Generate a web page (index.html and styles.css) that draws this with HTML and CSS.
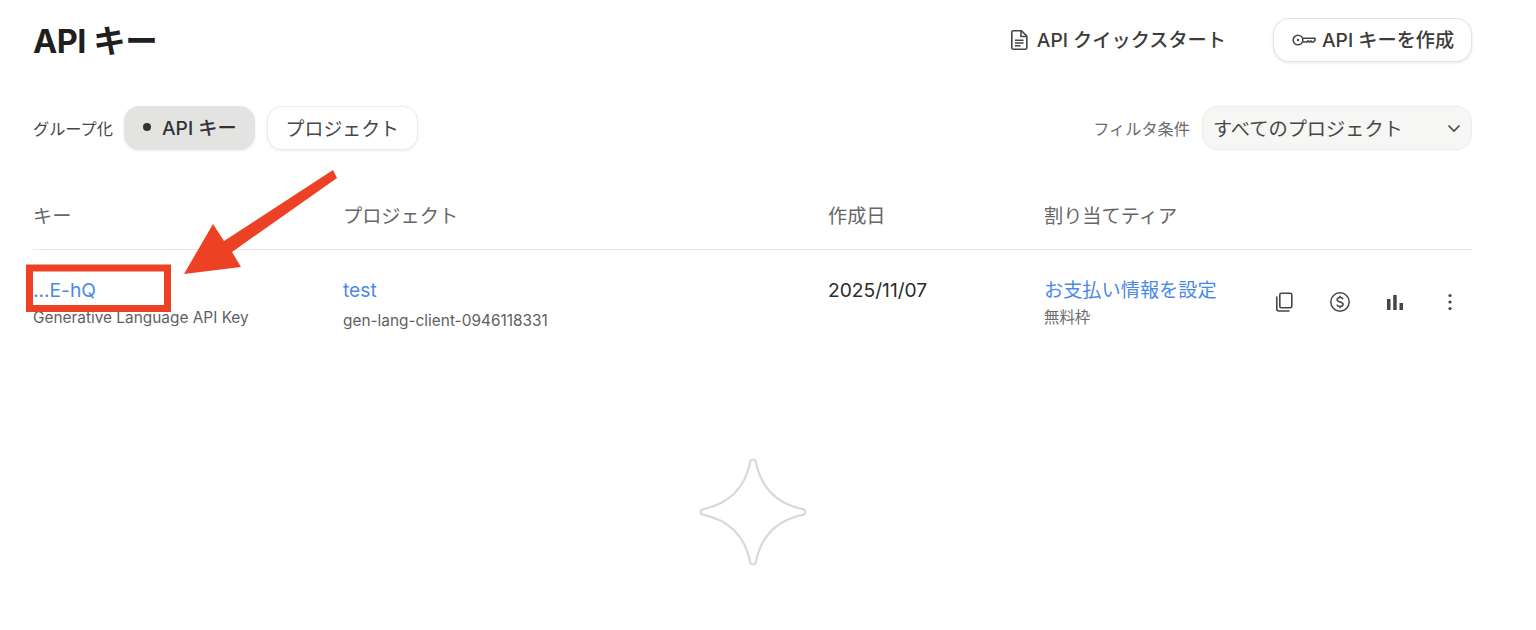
FILE: index.html
```html
<!DOCTYPE html>
<html lang="ja">
<head>
    <meta charset="UTF-8">
    <meta name="viewport" content="width=device-width, initial-scale=1.0">
    <title>API キー</title>
    <link rel="stylesheet" href="styles.css">
</head>
<body>
    <div class="container">
        <!-- Header -->
        <div class="header">
            <h1>API キー</h1>
            <div class="header-actions">
                <a class="quickstart">
                    <svg class="icon" width="20" height="20" viewBox="0 0 20 20" fill="none" stroke="#444746" stroke-width="1.600"><path d="M2.800 2.200A1.400 1.400 0 0 1 4.200 0.800H12.500L17.800 6.100V17.800A1.400 1.400 0 0 1 16.400 19.200H4.200A1.400 1.400 0 0 1 2.800 17.800Z" stroke-linejoin="round"/><path d="M12 1V6.500H17.500M6 10.200H14.500M6 13H14.500M6 15.800H11.500"/></svg>
                    <span>API クイックスタート</span>
                </a>
                <button class="create-btn">
                    <svg class="icon" width="24" height="14" viewBox="0 0 24 14" fill="none" stroke="#444746" stroke-width="1.600"><circle cx="6" cy="7" r="4.800"/><circle cx="6" cy="7" r="1.200" fill="#444746" stroke="none"/><path d="M10.800 5.200H23V7.500L21.500 9H20L18.700 8L17.300 9L15.900 8L14.500 9H10.800" stroke-linejoin="round"/></svg>
                    <span>API キーを作成</span>
                </button>
            </div>
        </div>

        <!-- Toolbar -->
        <div class="toolbar">
            <div class="group-by">
                <span class="toolbar-label">グループ化</span>
                <button class="chip chip-active"><i class="dot"></i>API キー</button>
                <button class="chip">プロジェクト</button>
            </div>
            <div class="filter">
                <span class="toolbar-label filter-label">フィルタ条件</span>
                <div class="select">
                    <span>すべてのプロジェクト</span>
                    <svg width="14" height="9" viewBox="0 0 14 9" fill="none" stroke="#444746" stroke-width="1.600"><path d="M1.500 1.500L7 7L12.500 1.500"/></svg>
                </div>
            </div>
        </div>

        <!-- Key table -->
        <div class="table">
            <div class="table-row table-head">
                <div>キー</div>
                <div>プロジェクト</div>
                <div>作成日</div>
                <div>割り当てティア</div>
            </div>
            <div class="table-row table-body">
                <div>
                    <a class="link">...E-hQ</a>
                    <p class="sub">Generative Language API Key</p>
                </div>
                <div>
                    <a class="link">test</a>
                    <p class="sub sub-project">gen-lang-client-0946118331</p>
                </div>
                <div class="date">2025/11/07</div>
                <div>
                    <a class="link">お支払い情報を設定</a>
                    <p class="sub sub-light">無料枠</p>
                </div>
                <div class="row-actions">
                    <svg width="20" height="20" viewBox="0 0 20 20" fill="none" stroke="#444746" stroke-width="1.600"><rect x="4.800" y="1.200" width="12" height="14.500" rx="1.500"/><path d="M1.800 4.500V17A2 2 0 0 0 3.800 19H14.500"/></svg>
                    <svg width="20" height="20" viewBox="0 0 20 20" fill="none" stroke="#444746" stroke-width="1.500"><circle cx="10" cy="10" r="9.200"/><path d="M13 7.200C12.600 6 11.400 5.500 10 5.500C8.300 5.500 7.100 6.300 7.100 7.700C7.100 10.600 13.100 9.300 13.100 12.300C13.100 13.700 11.800 14.500 10 14.500C8.400 14.500 7.200 13.800 6.900 12.600M10 3.800V5.500M10 14.500V16.200"/></svg>
                    <svg width="20" height="20" viewBox="0 0 20 20" fill="#444746"><rect x="2" y="7" width="3.500" height="11"/><rect x="8.200" y="3" width="3.500" height="15"/><rect x="14.500" y="11" width="3.500" height="7"/></svg>
                    <svg width="20" height="20" viewBox="0 0 20 20" fill="#444746"><circle cx="10" cy="3.500" r="1.600"/><circle cx="10" cy="10" r="1.600"/><circle cx="10" cy="16.500" r="1.600"/></svg>
                </div>
            </div>
        </div>

        <!-- Empty space mark -->
        <div class="spark">
            <svg width="110" height="110" viewBox="0 0 110 110" fill="none" stroke="#d9d9d9" stroke-width="2.200"><path d="M52.300 4.500C53 2 57 2 57.700 4.500C63 31 79 47 105.500 52.300C108 53 108 57 105.500 57.700C79 63 63 79 57.700 105.500C57 108 53 108 52.300 105.500C47 79 31 63 4.500 57.700C2 57 2 53 4.500 52.300C31 47 47 31 52.300 4.500Z"/></svg>
        </div>
    </div>

    <!-- Red annotation over the page -->
    <svg class="annotation" width="1536" height="630" viewBox="0 0 1536 630">
        <rect x="29.500" y="268" width="138" height="40.500" fill="none" stroke="#ec4124" stroke-width="7"/>
        <polygon points="333,170 337,178 232,252 241,267 184,274 213,224 224,241" fill="#ec4124"/>
    </svg>
</body>
</html>
```

FILE: styles.css
```css
body {
    font-family: Inter, "Noto Sans CJK JP", sans-serif;
    margin: 0;
    padding: 0;
    background-color: #fff;
    color: #1f1f1f;
    overflow: hidden;
}

.container {
    padding: 18px 64px 0 33px;
}

.header {
    display: flex;
    justify-content: space-between;
    align-items: center;
    height: 44px;
}

.header h1 {
    margin: 0 0 4px;
    font-size: 32.5px;
    font-weight: 700;
    letter-spacing: -0.5px;
}

.header-actions {
    display: flex;
    align-items: center;
    gap: 47px;
}

.quickstart {
    display: flex;
    align-items: center;
    gap: 8px;
    font-size: 19.2px;
    font-weight: 500;
    color: #3c3c3b;
}

.quickstart span,
.create-btn span {
    padding-bottom: 2px;
}

.create-btn {
    display: flex;
    align-items: center;
    gap: 6px;
    box-sizing: border-box;
    width: 199px;
    height: 44px;
    padding: 0 0 0 18px;
    background: #fff;
    border: 1px solid #e3e3e3;
    border-radius: 16px;
    box-shadow: 0 1px 3px rgba(0, 0, 0, 0.1);
    font: inherit;
    font-size: 19.2px;
    font-weight: 500;
    color: #3c3c3b;
}

.toolbar {
    display: flex;
    justify-content: space-between;
    align-items: center;
    margin-top: 44px;
    height: 44px;
}

.group-by,
.filter {
    display: flex;
    align-items: center;
}

.toolbar-label {
    font-size: 16.2px;
    color: #444746;
    margin-right: 11px;
}

.filter-label {
    margin-right: 12px;
    color: #6b6b6b;
}

.chip {
    display: flex;
    align-items: center;
    height: 44px;
    padding: 0 18px 2px;
    margin-right: 12px;
    background: #fff;
    border: 1px solid #ececec;
    border-radius: 15px;
    box-shadow: 0 1px 3px rgba(0, 0, 0, 0.08);
    font: inherit;
    font-size: 18.9px;
    color: #444746;
}

.chip-active {
    padding-right: 17px;
    background: #e3e3e2;
    border-color: #e3e3e2;
    font-size: 19.2px;
    font-weight: 500;
    color: #333;
}

.dot {
    width: 8px;
    height: 8px;
    margin-right: 11px;
    border-radius: 50%;
    background: #333;
}

.select {
    display: flex;
    justify-content: space-between;
    align-items: center;
    box-sizing: border-box;
    width: 270px;
    height: 44px;
    padding: 0 10px 0 10px;
    background: #f6f6f5;
    border: 1px solid #ececec;
    border-radius: 15px;
    font-size: 19.2px;
    color: #444746;
}

.table {
    margin-top: 30px;
}

.table-row {
    display: grid;
    grid-template-columns: 310px 485px 216px 215px 1fr;
}

.table-head {
    height: 69px;
    align-items: center;
    border-bottom: 1px solid #e8e8e8;
    font-size: 19.2px;
    color: #666;
}

.table-body {
    padding-top: 27px;
    font-size: 19.2px;
}

.link {
    display: block;
    line-height: 26px;
    color: #4a8ae6;
}

.sub {
    margin: 3px 0 0;
    font-size: 15.4px;
    line-height: 23px;
    color: #5f5f5f;
}

.sub-project {
    margin-top: 6px;
}

.sub-light {
    color: #6b6b6b;
}

.date {
    line-height: 26px;
    color: #2b2b2b;
}

.row-actions {
    display: flex;
    justify-content: space-between;
    align-items: center;
    height: 50px;
    padding: 0 12px 0 16px;
}

.spark {
    display: flex;
    justify-content: center;
    margin-top: 125px;
}

.annotation {
    position: absolute;
    top: 0;
    left: 0;
}
```
